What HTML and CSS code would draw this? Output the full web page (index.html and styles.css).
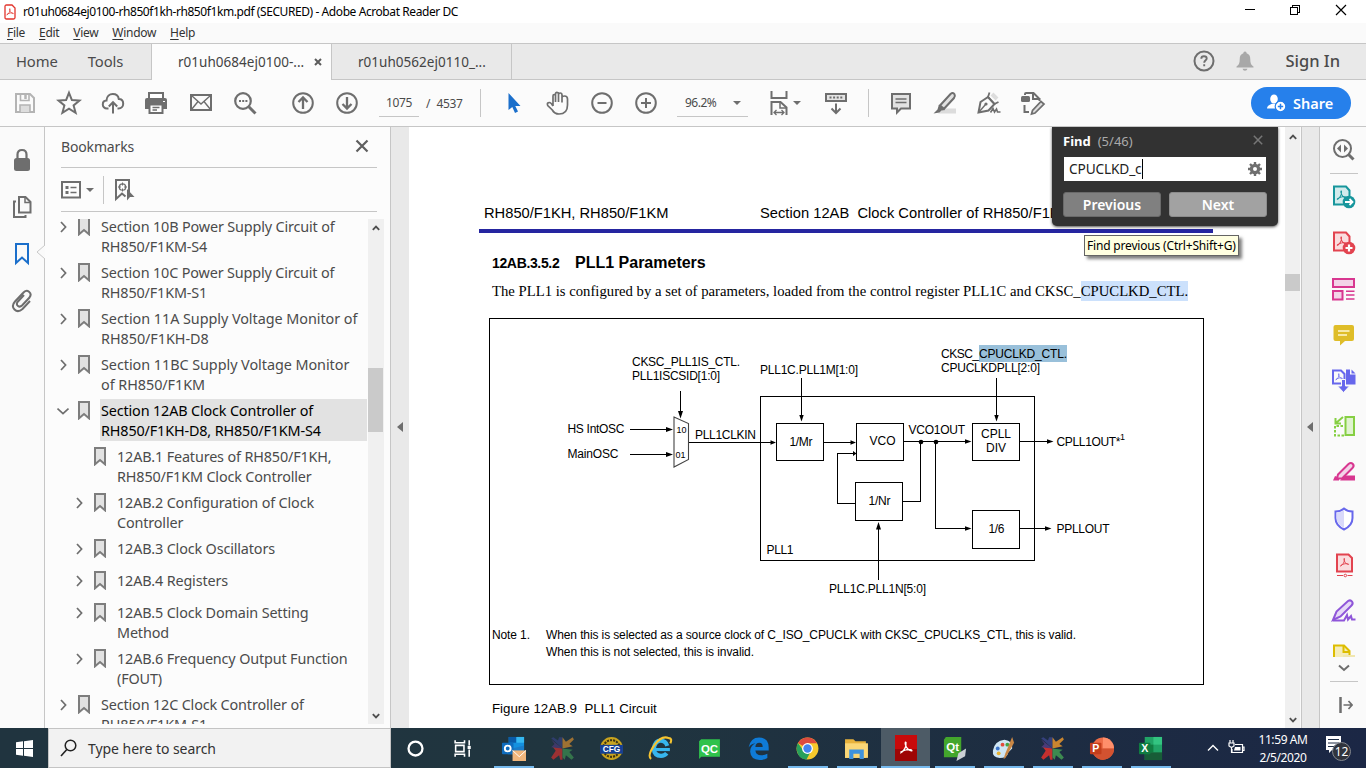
FILE: index.html
```html
<!DOCTYPE html>
<html lang="en">
<head>
<meta charset="utf-8">
<title>r01uh0684ej0100-rh850f1kh-rh850f1km.pdf (SECURED) - Adobe Acrobat Reader DC</title>
<link rel="stylesheet" href="styles.css">
</head>
<body>
<svg class="defs" width="0" height="0">
  <symbol id="bm" viewBox="0 0 12 19"><path d="M1 1H11V17.3L6 13L1 17.3Z" fill="#e2e2e2" stroke="#7d7d7d" stroke-width="2"/></symbol>
  <symbol id="chev" viewBox="0 0 12 12"><path d="M4 1L8.6 6L4 11" fill="none" stroke="#6e6e6e" stroke-width="1.7"/></symbol>
  <symbol id="chevd" viewBox="0 0 12 12"><path d="M.5 3.5L6 8.7L11.5 3.5" fill="none" stroke="#6e6e6e" stroke-width="1.7"/></symbol>
  <symbol id="sbup" viewBox="0 0 8 6"><path d="M.8 4.9L4 1.6L7.2 4.9" fill="none" stroke="#4e4e4e" stroke-width="1.8"/></symbol>
  <symbol id="sbdn" viewBox="0 0 8 6"><path d="M.8 1.1L4 4.4L7.2 1.1" fill="none" stroke="#4e4e4e" stroke-width="1.8"/></symbol>
  <symbol id="acro" viewBox="0 0 12 12"><path d="M1 10.5C4 9 6.5 5 6 1.2C5.4.6 5 1.6 5.6 3.5C6.5 6.5 9 8.6 11 8.4C11.6 7.6 9 7 6.500 7.500C4.500 8 2.500 8.600 1.200 9.700" fill="none" stroke="currentColor" stroke-width="1.100"/></symbol>
  <symbol id="xstar" viewBox="0 0 22 22"><path d="M11 11L1 2L3 1L7 4L8 1Z M11 11L8 1H11Z" fill="#35407c"/><path d="M11 11V1L14 5L20 1L21 3L17 7L20 9Z" fill="#c9852f"/><path d="M11 11L2 9L5 13L1 19L3 21L8 17L9 21H11Z" fill="#c4302f"/><path d="M11 11L20 12L17 14L21 19L19 21L14 17L13 21L11 19Z" fill="#3d8a50"/><path d="M11 11L1 10L4 7L1 3Z" fill="#4a3a78"/></symbol>
</svg>

<header class="titlebar">
  <svg class="app" width="12" height="16" viewBox="0 0 12 16"><path d="M1 2.500Q1 1 2.500 1H8L11 4V13.500Q11 15 9.500 15H2.500Q1 15 1 13.500Z" fill="#fff" stroke="#e2332b" stroke-width="1.300"/><svg x="2" y="4" width="8" height="8" color="#e2332b"><use href="#acro"/></svg></svg>
  <span class="title">r01uh0684ej0100-rh850f1kh-rh850f1km.pdf (SECURED) - Adobe Acrobat Reader DC</span>
  <svg class="winbtns" width="104" height="12" viewBox="0 0 104 12" fill="none" stroke="#000"><path d="M0 5.500H10" /><path d="M45.500 3.500H52.500V10.500H45.500ZM47.500 3V1.500H54.500V8.500H53" shape-rendering="crispEdges"/><path d="M91 1L101 11M101 1L91 11" stroke-width="1.200"/></svg>
</header>
<nav class="menubar"><span><u>F</u>ile</span><span><u>E</u>dit</span><span><u>V</u>iew</span><span><u>W</u>indow</span><span><u>H</u>elp</span></nav>

<div class="tabs">
  <div class="hometabs"><span>Home</span><span>Tools</span></div>
  <div class="tab active"><span>r01uh0684ej0100-...</span><svg width="8" height="8" viewBox="0 0 8 8"><path d="M1 1L7 7M7 1L1 7" stroke="#5c5c5c" stroke-width="2"/></svg></div>
  <div class="tab other"><span>r01uh0562ej0110_...</span></div>
  <div class="account">
    <svg width="22" height="22" viewBox="0 0 22 22"><circle cx="11" cy="11" r="9.500" fill="none" stroke="#6e6e6e" stroke-width="2"/><path d="M8.300 8.700Q8.300 6.300 11 6.300T13.700 8.500C13.700 10.200 11.200 10.400 11.200 12.700M11.200 14.200V16.200" fill="none" stroke="#6e6e6e" stroke-width="1.900"/></svg>
    <svg class="bell" width="18" height="20" viewBox="0 0 18 20"><path d="M9 0.500C10.200 .5 10.600 1.500 10.600 2.300C13.500 3.200 14.300 5.500 14.300 8.500C14.300 12.500 15.300 14 17.500 15.500V16.500H.5V15.500C2.700 14 3.700 12.500 3.700 8.500C3.700 5.500 4.500 3.200 7.400 2.300C7.400 1.500 7.800 .5 9 .5ZM6.500 17.800H11.500Q11 19.800 9 19.800T6.500 17.800Z" fill="#a8a8a8"/></svg>
    <span>Sign In</span>
  </div>
</div>

<div class="toolbar">
  <div class="grp g1">
    <svg viewBox="0 0 26 26" fill="none" stroke="#b4b4b4" stroke-width="2"><path d="M4 4H18L22 8V22H4Z"/><path d="M8.500 4V10.500H17V4" stroke-width="1.600"/><path d="M13.500 5V9" stroke-width="2.500"/><path d="M8 22V15H18V22" fill="#ddd" stroke-width="1.600"/></svg>
    <svg viewBox="0 0 26 26"><path d="M13 2.800L15.900 10.100L23.500 10.500L17.600 15.400L19.600 22.800L13 18.600L6.400 22.800L8.400 15.400L2.500 10.500L10.100 10.100Z" fill="none" stroke="#6e6e6e" stroke-width="2"/></svg>
    <svg viewBox="0 0 26 26" fill="none" stroke="#6e6e6e" stroke-width="2"><path d="M8.500 18.500H7C4.300 18.500 2.800 16.500 2.800 14.400C2.800 12.200 4.300 10.600 6.500 10.500C6.700 6.500 9.400 4 12.800 4C16.200 4 18.400 6.300 18.800 9C21.600 9 23.200 11 23.200 13.700C23.200 16.500 21.300 18.500 18.500 18.500H17.500"/><path d="M13 23.500V12.500M8.800 16.500L13 12.200L17.200 16.500"/></svg>
    <svg class="print" viewBox="0 0 26 26"><path d="M6 3H20V9H6Z" fill="#fff" stroke="#6e6e6e" stroke-width="2"/><path d="M4 8H22Q24 8 24 10V19H2V10Q2 8 4 8Z" fill="#6e6e6e"/><path d="M6.500 14.500H19.500V23H6.500Z" fill="#fff" stroke="#6e6e6e" stroke-width="2"/><path d="M9.500 17.500H16.500M9.500 20H14" stroke="#6e6e6e" stroke-width="1.300"/><path d="M20 11.500H22" stroke="#fff"/></svg>
    <svg viewBox="0 0 26 26" fill="none" stroke="#6e6e6e"><rect x="3" y="5" width="20" height="15" stroke-width="2"/><path d="M3.500 5.500L13 14L22.500 5.500M3.500 19.500L10 11.500M22.500 19.500L16 11.500" stroke-width="1.400"/></svg>
    <svg viewBox="0 0 26 26" fill="none" stroke="#6e6e6e"><circle cx="11" cy="11" r="7.800" stroke-width="2.200"/><path d="M16.800 16.800L23.500 23.500" stroke-width="3"/><path d="M7 11H9M10.200 11H12.200M13.400 11H15.400" stroke-width="1.800"/></svg>
  </div>
  <div class="grp g2">
    <svg viewBox="0 0 26 26" fill="none" stroke="#6e6e6e" stroke-width="2"><circle cx="13" cy="13" r="9.800"/><path d="M13 19V8M8.500 12L13 7.500L17.500 12" stroke-width="2.300"/></svg>
    <svg viewBox="0 0 26 26" fill="none" stroke="#6e6e6e" stroke-width="2"><circle cx="13" cy="13" r="9.800"/><path d="M13 7V18M8.500 14L13 18.500L17.500 14" stroke-width="2.300"/></svg>
  </div>
  <div class="pageno">1075</div><div class="pages">/&nbsp; 4537</div>
  <i class="sep s1"></i>
  <div class="grp g3">
    <svg viewBox="0 0 26 26"><path d="M7.500 3V20L11.300 17L14 23L17 21.500L14.300 16H19.500Z" fill="#1b6fcb"/></svg>
    <svg viewBox="0 0 26 26" fill="none" stroke="#6e6e6e" stroke-width="1.700"><path d="M8 16V6Q8 4.500 9.200 4.500T10.500 6V12M10.500 6V4Q10.500 2.300 12 2.300T13.500 4V12M13.500 5Q13.500 3 15.200 3T17 5V12.500M17 7.500Q17.200 6 19.500 6Q22.500 6 22.500 9V15Q22.500 24 14 24Q9.500 24 7.300 20L2.700 15.500Q1.500 12.500 4.500 12.500Q6 12.500 8 16"/></svg>
    <svg viewBox="0 0 26 26" fill="none" stroke="#6e6e6e" stroke-width="2"><circle cx="13" cy="13" r="9.800"/><path d="M8.500 13H17.500"/></svg>
    <svg viewBox="0 0 26 26" fill="none" stroke="#6e6e6e" stroke-width="2"><circle cx="13" cy="13" r="9.800"/><path d="M8 13H18M13 8V18"/></svg>
  </div>
  <div class="zoom"><span>96.2%</span><i class="caret"></i></div>
  <div class="fit"><svg width="18" height="26" viewBox="0 0 18 26" fill="none" stroke="#6e6e6e" stroke-width="2"><path d="M1.500 1V8H16.500V1M1.500 25V12H10.500L16.500 17.500V25"/><path d="M10 12V18H16" stroke-width="1.500"/><path d="M4 22.500H14M6.500 20L4 22.500L6.500 25M11.500 20L14 22.500L11.500 25" stroke-width="1.300"/></svg><i class="caret"></i></div>
  <svg class="kb" viewBox="0 0 26 26" fill="none" stroke="#6e6e6e" stroke-width="2"><rect x="3" y="4" width="20" height="7" fill="#e4e4e4"/><path d="M6.500 7.500H20" stroke-dasharray="2 1.600"/><path d="M13 13.500V23M8.500 18.500L13 23L17.500 18.500"/></svg>
  <i class="sep s2"></i>
  <div class="grp g4">
    <svg viewBox="0 0 26 26"><path d="M4 4H22V18.500H13L9 22.500V18.500H4Z" fill="#e2e2e2" stroke="#6e6e6e" stroke-width="2"/><path d="M7.500 9H18.500M7.500 12.500H18.500" stroke="#6e6e6e" stroke-width="1.500"/></svg>
    <svg viewBox="0 0 26 26"><path d="M12 18.500H24V23.500H6Z" fill="#dcdcdc"/><path d="M8 15.500L18.500 4Q21 2 22.500 4.300Q23.500 6 22 8L12 18.800Z" fill="#e0e0e0" stroke="#6e6e6e" stroke-width="2"/><path d="M7 14.500L13 20L9.500 20.500L7.500 22.500L1.500 23.500L5.500 19.500Z" fill="#6e6e6e"/></svg>
    <svg viewBox="0 0 26 26" fill="none" stroke="#6e6e6e" stroke-width="2"><path d="M16 4L21 9" stroke="#ddd" stroke-width="4"/><path d="M2.500 22.500L4.500 12L12 7L18.500 14L12.500 20.500Z"/><path d="M3 22L9.500 14.500" stroke-width="1.400"/><circle cx="10" cy="14" r="1.600" fill="#6e6e6e" stroke="none"/><path d="M13.500 2.500L12 7L18.500 14L22.500 12" stroke-width="1.800"/><path d="M14.500 22.500L17 18.500L18.500 22L20.500 19L21.500 22H24.500" stroke-width="1.600"/></svg>
    <svg viewBox="0 0 26 26" fill="none" stroke="#6e6e6e" stroke-width="2"><path d="M5 5V4Q5 3 6 3H13.500L19 8.500M4.500 15V22H9M13 3V9H19.500V11"/><rect x="1" y="6" width="9" height="6" rx="1.500" fill="#6e6e6e" stroke="none"/><path d="M11.500 24L12.500 20.500L21 11.500L24 14L15 23Z" fill="#ddd" stroke-width="1.700"/></svg>
  </div>
  <button class="share"><svg width="19" height="18" viewBox="0 0 19 18"><ellipse cx="7" cy="5" rx="3.800" ry="4.500" fill="#fff"/><path d="M0 14.500Q0 11.500 5 9.800H9Q10.500 10.500 11 11V14.500Z" fill="#fff"/><circle cx="13.500" cy="12.500" r="5.300" fill="#fff" stroke="#2680eb" stroke-width="1.200"/><path d="M10.800 12.500H16.200M13.500 9.800V15.200" stroke="#2680eb" stroke-width="1.500"/></svg><span>Share</span></button>
</div>

<main class="main">
  <aside class="rail">
    <svg width="18" height="24" viewBox="0 0 18 24"><path d="M4.500 11V6.500Q4.500 2 9 2T13.500 6.500V11" fill="none" stroke="#6e6e6e" stroke-width="2.200"/><rect x="1" y="10" width="16" height="13" rx="2.500" fill="#6e6e6e"/></svg>
    <svg width="20" height="24" viewBox="0 0 20 24" fill="none" stroke="#6e6e6e" stroke-width="2"><path d="M4 6.500H2V22H13.500V20"/><path d="M7 2H13.500L18.500 7V17.500H7Z"/><path d="M13 2.500V7.500H18" stroke-width="1.500"/></svg>
    <svg width="16" height="24" viewBox="0 0 16 24"><path d="M2 2H14V21L8 15.500L2 21Z" fill="none" stroke="#1b6fcb" stroke-width="2"/></svg>
    <svg width="22" height="24" viewBox="0 0 22 24"><path d="M13 6L6.500 13Q5 15.500 7 17T11 16.500L18.500 8.500Q21 5 18 2.700T12 4L4 12.500Q0 17 3.500 20.500T11.500 20L19 12" fill="none" stroke="#6e6e6e" stroke-width="2"/></svg>
    <svg class="notch" width="9" height="16" viewBox="0 0 9 16"><path d="M9 1L1 8L9 15" fill="#fafafa" stroke="#c8c8c8"/></svg>
  </aside>
  <section class="bookmarks">
    <div class="bhead"><span>Bookmarks</span><svg width="14" height="14" viewBox="0 0 14 14"><path d="M1.500 1.500L12.500 12.500M12.500 1.500L1.500 12.500" stroke="#5f5f5f" stroke-width="2.200"/></svg></div>
    <div class="btools">
      <svg width="20" height="18" viewBox="0 0 20 18"><rect x="1" y="1" width="18" height="15.500" fill="none" stroke="#6e6e6e" stroke-width="2"/><path d="M4.500 6.500H7.500M4.500 11.500H7.500" stroke="#6e6e6e" stroke-width="3"/><path d="M9.500 6.500H15.500M9.500 11.500H15.500" stroke="#6e6e6e" stroke-width="1.600"/></svg>
      <i class="caret"></i><i class="bsep"></i>
      <svg width="21" height="24" viewBox="0 0 21 24"><path d="M2 2H15V14M2 1V21L8 15.500L11.500 18.500" fill="none" stroke="#6e6e6e" stroke-width="2"/><circle cx="8.500" cy="9" r="3.200" fill="none" stroke="#6e6e6e" stroke-width="1.300"/><path d="M8.500 4.500V7.500M8.500 10.500V13.500M4 9H7M10 9H13" stroke="#6e6e6e"/><path d="M13 11V22.500L16 19H20.500Z" fill="#6e6e6e"/></svg>
    </div>
    <div class="blist">
      <div class="items">
        <div class="row"><svg class="c"><use href="#chev"/></svg><svg class="b"><use href="#bm"/></svg><p>Section 10B Power Supply Circuit of<br>RH850/F1KM-S4</p></div>
        <div class="row"><svg class="c"><use href="#chev"/></svg><svg class="b"><use href="#bm"/></svg><p>Section 10C Power Supply Circuit of<br>RH850/F1KM-S1</p></div>
        <div class="row"><svg class="c"><use href="#chev"/></svg><svg class="b"><use href="#bm"/></svg><p class="wide">Section 11A Supply Voltage Monitor of<br>RH850/F1KH-D8</p></div>
        <div class="row"><svg class="c"><use href="#chev"/></svg><svg class="b"><use href="#bm"/></svg><p class="wide">Section 11BC Supply Voltage Monitor<br>of RH850/F1KM</p></div>
        <div class="row sel"><svg class="c"><use href="#chevd"/></svg><svg class="b"><use href="#bm"/></svg><p>Section 12AB Clock Controller of<br>RH850/F1KH-D8, RH850/F1KM-S4</p></div>
        <div class="row sub"><svg class="c"></svg><svg class="b"><use href="#bm"/></svg><p>12AB.1 Features of RH850/F1KH,<br>RH850/F1KM Clock Controller</p></div>
        <div class="row sub"><svg class="c"><use href="#chev"/></svg><svg class="b"><use href="#bm"/></svg><p>12AB.2 Configuration of Clock<br>Controller</p></div>
        <div class="row sub"><svg class="c"><use href="#chev"/></svg><svg class="b"><use href="#bm"/></svg><p>12AB.3 Clock Oscillators</p></div>
        <div class="row sub"><svg class="c"><use href="#chev"/></svg><svg class="b"><use href="#bm"/></svg><p>12AB.4 Registers</p></div>
        <div class="row sub"><svg class="c"><use href="#chev"/></svg><svg class="b"><use href="#bm"/></svg><p>12AB.5 Clock Domain Setting<br>Method</p></div>
        <div class="row sub"><svg class="c"><use href="#chev"/></svg><svg class="b"><use href="#bm"/></svg><p>12AB.6 Frequency Output Function<br>(FOUT)</p></div>
        <div class="row"><svg class="c"><use href="#chev"/></svg><svg class="b"><use href="#bm"/></svg><p>Section 12C Clock Controller of<br>RH850/F1KM-S1</p></div>
      </div>
      <div class="sbar bsb"><svg width="8" height="6"><use href="#sbup"/></svg><i class="thumb"></i><svg class="dn" width="8" height="6"><use href="#sbdn"/></svg></div>
    </div>
  </section>
  <div class="gutter"><i></i></div>
  <article class="page">
    <div class="phead"><span class="p1">RH850/F1KH, RH850/F1KM</span><span class="p2">Section 12AB&nbsp; Clock Controller of RH850/F1K</span></div>
    <h2><span class="num">12AB.3.5.2</span><span class="name">PLL1 Parameters</span></h2>
    <p class="para"><span>The PLL1 is configured by a set of parameters, loaded from the control register PLL1C and CKSC_</span><mark>CPUCLKD_CTL.</mark></p>
    <svg class="figure" width="715" height="367" viewBox="489 318 715 367">
      <g fill="none" stroke="#000" shape-rendering="crispEdges">
        <rect x="489.500" y="318.500" width="714" height="366"/>
        <rect x="760.500" y="396.500" width="274" height="164"/>
        <rect x="776.500" y="423.500" width="47" height="37"/><rect x="856.500" y="423.500" width="47" height="37"/>
        <rect x="855.500" y="482.500" width="47" height="38"/><rect x="972.500" y="423.500" width="47" height="37"/>
        <rect x="972.500" y="510.500" width="47" height="38"/>
        <path d="M680.500 391V414M630 429.500H668M630 454.500H668M689 442.500H772M824 442.500H852M801.500 378V417M855 503.500H837.500V453.500H853M904 441.500H968M920.500 442V501.500H903M935.500 442V528.500H968M1020 441.500H1050M1020 528.500H1048M996.500 378V417M878.500 580V526"/>
      </g>
      <path d="M674 417L688.500 423.500V459.500L674 467Z" fill="none" stroke="#444" stroke-width="1.100"/>
      <g fill="#000">
        <path d="M678 411H683L680.500 418.500ZM666 427V432L673 429.500ZM666 452V457L673 454.500ZM770.500 440.300V444.700L776 442.500ZM850.500 440.300V444.700L856 442.500ZM799.300 415H803.700L801.500 421.500ZM853 451V456L856.500 453.500ZM965 439.300V443.700L971.500 441.500ZM965 526.300V530.700L971.500 528.500ZM1047 439.300V443.700L1053.500 441.500ZM1045 526.300V530.700L1051.500 528.500ZM994.300 415H998.700L996.500 421.500ZM876 529.500H881L878.500 522Z"/>
        <circle cx="921" cy="442" r="2.300"/><circle cx="936" cy="442" r="2.300"/>
      </g>
      <rect x="979" y="345" width="88" height="17" fill="#99c0da"/>
      <g class="lbl">
        <text x="632" y="366" textLength="108">CKSC_PLL1IS_CTL.</text><text x="632" y="380" textLength="88">PLL1ISCSID[1:0]</text>
        <text x="760" y="374" textLength="98">PLL1C.PLL1M[1:0]</text>
        <text x="941" y="358" textLength="38">CKSC_</text><text x="979" y="358" textLength="88">CPUCLKD_CTL.</text>
        <text x="941" y="372" textLength="99">CPUCLKDPLL[2:0]</text>
        <text x="567.500" y="433" textLength="57">HS IntOSC</text><text x="567.500" y="458" textLength="51">MainOSC</text>
        <text x="676.500" y="433" class="tiny" textLength="10">10</text><text x="675.500" y="458" class="tiny" textLength="10">01</text>
        <text x="695" y="439" textLength="61">PLL1CLKIN</text>
        <text x="789.500" y="446" textLength="23">1/Mr</text><text x="869.500" y="445" textLength="26">VCO</text>
        <text x="868.500" y="505" textLength="22">1/Nr</text><text x="908.500" y="434" textLength="56.500">VCO1OUT</text>
        <text x="981" y="438" textLength="30">CPLL</text><text x="986" y="452" textLength="20">DIV</text>
        <text x="1056.500" y="446" textLength="64">CPLL1OUT*</text><text x="1120" y="440" class="tiny">1</text>
        <text x="1056.500" y="533" textLength="53">PPLLOUT</text><text x="988.500" y="533" textLength="16">1/6</text>
        <text x="766.500" y="554" textLength="27">PLL1</text><text x="829" y="593" textLength="97">PLL1C.PLL1N[5:0]</text>
        <text x="492" y="639" textLength="38">Note 1.</text>
        <text x="546" y="639" textLength="530">When this is selected as a source clock of C_ISO_CPUCLK with CKSC_CPUCLKS_CTL, this is valid.</text>
        <text x="546" y="656" textLength="208">When this is not selected, this is invalid.</text>
      </g>
    </svg>
    <p class="caption">Figure 12AB.9&nbsp; PLL1 Circuit</p>
    <div class="find">
      <div class="ftop"><b>Find</b><span>(5/46)</span><svg width="10" height="10" viewBox="0 0 10 10"><path d="M.8.8L9.200 9.200M9.200.8L.8 9.200" stroke="#777" stroke-width="1.500"/></svg></div>
      <div class="finput"><span>CPUCLKD_c</span><svg width="14" height="14" viewBox="0 0 14 14"><circle cx="7" cy="7" r="3.600" fill="none" stroke="#6e6e6e" stroke-width="3.200"/><path d="M7 0V2.500M7 11.500V14M0 7H2.500M11.500 7H14M2 2L4 4M10 10L12 12M12 2L10 4M4 10L2 12" stroke="#6e6e6e" stroke-width="2.400"/></svg></div>
      <div class="fbtns"><button>Previous</button><button class="next">Next</button></div>
    </div>
    <div class="tip">Find previous (Ctrl+Shift+G)</div>
  </article>
  <div class="sbar psb"><svg width="8" height="6"><use href="#sbup"/></svg><i class="thumb"></i><svg class="dn" width="8" height="6"><use href="#sbdn"/></svg></div>
  <div class="gutter right"><i></i></div>
  <aside class="tools">
    <svg class="t0" viewBox="0 0 26 26"><circle cx="11.500" cy="11.500" r="8.500" fill="none" stroke="#6e6e6e" stroke-width="2"/><path d="M17.500 17.500L22.500 22.500" stroke="#6e6e6e" stroke-width="3"/><path d="M10 7.500V15.500L6 11.500ZM13 7.500V15.500L17 11.500Z" fill="#6e6e6e"/></svg>
    <hr>
    <div class="tlist">
    <svg viewBox="0 0 26 26"><path d="M3 2.500H15L18.500 6.500V20.500H3Z" fill="#d3ebec" stroke="#17969c" stroke-width="2"/><svg x="5" y="6" width="11" height="11" color="#17969c"><use href="#acro"/></svg><circle cx="18" cy="18" r="6.300" fill="#17969c"/><path d="M14 18H21M18.500 15L21.500 18L18.500 21" stroke="#fff" stroke-width="1.800" fill="none"/></svg>
    <svg viewBox="0 0 26 26"><path d="M3 2.500H15L18.500 6.500V20.500H3Z" fill="#fadcde" stroke="#e2434f" stroke-width="2"/><svg x="5" y="6" width="11" height="11" color="#e2434f"><use href="#acro"/></svg><circle cx="18" cy="18" r="6.300" fill="#e2434f"/><path d="M14.500 18H21.500M18 14.500V21.500" stroke="#fff" stroke-width="2.200"/></svg>
    <svg viewBox="0 0 26 26" fill="#f3d3e8" stroke="#d83790" stroke-width="2"><path d="M2 3H23V11H2ZM2 15H11.500V23.500H2Z"/><path d="M15 15.200H23.500M15 19H23.500M15 23H23.500" stroke-width="1.400"/></svg>
    <svg viewBox="0 0 26 26"><path d="M4.500 3H21Q23 3 23 5V17Q23 19 21 19H14L9 23.500V19H4.500Q2.500 19 2.500 17V5Q2.500 3 4.500 3Z" fill="#dfbd28"/><path d="M7 9H18.500M7 13H16" stroke="#fff8d0" stroke-width="1.600"/></svg>
    <svg viewBox="0 0 26 26"><path d="M15 1.500H19V6.500H24.500V16.500H15Z" fill="#6767ec"/><path d="M20.500 1.500L24.500 5.500H20.500Z" fill="#6767ec"/><path d="M2 2.500H10L13.500 6V15.500H2Z" fill="#fafafa" stroke="#6767ec" stroke-width="2"/><svg x="4" y="5" width="8" height="8" color="#6767ec"><use href="#acro"/></svg><path d="M10.500 11.500H14.500V18H18.500L12.500 24.500L6.500 18H10.500Z" fill="#6767ec" stroke="#fafafa"/></svg>
    <svg viewBox="0 0 26 26" fill="none" stroke="#86cf43" stroke-width="2"><rect x="14.500" y="3" width="8.500" height="18" fill="#e0f3d0"/><path d="M12 12H4V21.500H13" stroke-dasharray="2.500 1.500"/><path d="M12 3L5 9M4.500 4V9.500H10"/></svg>
    <svg viewBox="0 0 26 26"><path d="M9 20.500L14 15.500H24V20.500ZM2 20.500L4 16L8 17.500V20.500Z" fill="#d83790"/><path d="M7 14.500L17.500 4Q20 2 21.800 4T21.500 8L11 18.500L6 18.500Z" fill="#f3d3e8" stroke="#d83790" stroke-width="2"/></svg>
    <svg viewBox="0 0 26 26"><path d="M13 2.500Q16.500 5.500 21.500 5.500V12Q21.500 19.500 13 23.500Q4.500 19.500 4.500 12V5.500Q9.500 5.500 13 2.500Z" fill="#fff" stroke="#6767ec" stroke-width="2"/><path d="M13 4V22Q5.500 18 5.500 12V6.500Q9.500 6.500 13 4Z" fill="#d9d9fa"/></svg>
    <svg viewBox="0 0 26 26"><path d="M6 2.500H17.500L21 6V19.500H6Z" fill="#fadcde" stroke="#e2434f" stroke-width="2"/><svg x="8.500" y="5.500" width="10" height="10" color="#e2434f"><use href="#acro"/></svg><path d="M6 23.500H12M16.500 23.500H21.500" stroke="#e2434f"/><circle cx="14.300" cy="23.500" r="1.300" fill="none" stroke="#e2434f"/></svg>
    <svg viewBox="0 0 26 26" fill="none" stroke="#8f56d9" stroke-width="2"><path d="M2 22L5.500 13.500L17 3Q19.500 1.500 21 3.500T20.500 7.500L9.500 18.500L2 22Z" fill="#e6d9f7"/><path d="M2 22.500H13L16 17L17 21.500L20 18L21 21.500H24.500"/></svg>
    <svg class="cut" viewBox="0 0 26 14"><path d="M3 14V2.500H13L18.500 8V14" fill="#f5ecb8" stroke="#ddbd00" stroke-width="2"/><path d="M12.500 2V9H19" fill="none" stroke="#ddbd00" stroke-width="2"/><path d="M12 13H24" stroke="#f0e6b0" stroke-width="2"/></svg>
    </div>
    <svg class="more" width="12" height="8" viewBox="0 0 12 8"><path d="M1 1.500L6 6L11 1.500" fill="none" stroke="#6e6e6e" stroke-width="2"/></svg>
    <hr>
    <svg class="coll" width="14" height="16" viewBox="0 0 14 16"><path d="M1.500 0V16" stroke="#6e6e6e" stroke-width="2.500"/><path d="M4.500 8H13M9.500 4L13 8L9.500 12" fill="none" stroke="#6e6e6e" stroke-width="1.700"/></svg>
  </aside>
</main>

<footer class="taskbar">
  <div class="start"><svg width="17" height="17" viewBox="0 0 17 17" fill="#fff"><path d="M0 2.300L7 1.300V8H0ZM8 1.200L17 0V8H8ZM0 9H7V15.700L0 14.700ZM8 9H17V17L8 15.800Z"/></svg></div>
  <div class="search"><svg width="17" height="18" viewBox="0 0 17 18"><circle cx="10.500" cy="6.500" r="5.300" fill="none" stroke="#222" stroke-width="1.500"/><path d="M6.800 10.500L1 17" stroke="#222" stroke-width="1.600"/></svg><span>Type here to search</span></div>
  <div class="apps">
    <div><svg viewBox="0 0 24 24"><circle cx="12" cy="12" r="6.700" fill="none" stroke="#fff" stroke-width="2.200"/></svg></div>
    <div><svg viewBox="0 0 24 24" fill="none" stroke="#fff" stroke-width="1.500"><path d="M3 4V6.500H12V4M3 20V17.500H12V20M3.500 9H11.500V15H3.500ZM16.500 4V9M16.500 13V20"/><path d="M15 11H18" stroke-width="3"/></svg></div>
    <div class="run"><svg viewBox="0 0 26 26"><path d="M8 1H24V14H8Z" fill="#1490df"/><path d="M8 1H16V7H8Z" fill="#0a5ba8"/><path d="M16 1H24V7H16Z" fill="#35b8f1"/><path d="M7 14L24 10V19H7Z" fill="#1a7cc9"/><rect x="1" y="7" width="12" height="12" rx="1" fill="#0f6cbd"/><circle cx="7" cy="13" r="3" fill="none" stroke="#fff" stroke-width="2"/><path d="M12 15H27V26H12Z" fill="#f0b67c"/><path d="M12 15L19 21.500L26 15" fill="none" stroke="#fff"/></svg></div>
    <div><svg class="dim" viewBox="0 0 22 22"><use href="#xstar"/></svg></div>
    <div><svg viewBox="0 0 24 24"><circle cx="12" cy="12" r="11" fill="#c9a41f"/><circle cx="12" cy="12" r="8" fill="none" stroke="#3b3312" stroke-width="2" stroke-dasharray="2 1"/><path d="M1 8.500H23V17H1Z" fill="#153f94"/><text x="12" y="15.500" class="cfg">CFG</text></svg></div>
    <div><svg viewBox="0 0 24 24"><path d="M18.500 9.500Q17 4.500 12 4.500T5.500 12Q6 19 12.500 19Q16 19 18 16.500" fill="none" stroke="#37b6ee" stroke-width="4"/><path d="M6 13H21" stroke="#37b6ee" stroke-width="3"/><path d="M3 22Q-1 19 6 9T20 2Q23.500 2 21.500 7" fill="none" stroke="#f5c431" stroke-width="2"/></svg></div>
    <div><svg viewBox="0 0 24 24"><path d="M4 3H22V20H4L2 22V5Z" fill="#2fc24c"/><text x="12" y="16" class="qc">QC</text></svg></div>
    <div><svg viewBox="0 0 24 24"><path d="M2.500 11Q4.500 1.500 12.500 1.500Q21.500 1.500 21.800 11V14H9Q9.500 18.500 14.500 18.500Q18 18.500 20.500 17V21Q17.500 23 13 23Q4.500 22.500 4 15Q4 9.500 9 7Q5 7.500 2.500 11ZM9 10.500H16Q16 6.500 12.700 6.500T9 10.500Z" fill="#0f7bd7" fill-rule="evenodd"/></svg></div>
    <div class="run"><svg viewBox="0 0 24 24"><circle cx="12" cy="12" r="10.500" fill="#f6c92c"/><path d="M12 12L2.800 6.800Q6 1.500 12 1.500T21.200 7H12Z" fill="#dd4b3e"/><path d="M2.800 6.800Q.5 11 2.500 16.500T11 22.500L15 15L8 14Z" fill="#28a05b"/><circle cx="12" cy="12" r="5.200" fill="#fff"/><circle cx="12" cy="12" r="4" fill="#4384ef"/></svg></div>
    <div class="run"><svg viewBox="0 0 24 24"><path d="M1 3H9L11 5H21V21H1Z" fill="#e8b23c"/><path d="M1 7H23V21H1Z" fill="#fbd777"/><path d="M5 13H19V22H15V17H9V22H5Z" fill="#3e92dd"/></svg></div>
    <div class="run on"><svg viewBox="0 0 26 26"><path d="M2 0H24V26H2Z" fill="#c80a0a"/><path d="M2 14H24V26H2Z" fill="#9e0505"/><svg x="6" y="6" width="14" height="14" color="#fff"><use href="#acro"/></svg></svg></div>
    <div class="run"><svg viewBox="0 0 26 26"><path d="M4 1H20V18L16 22H2V4Z" fill="#43a62c"/><text x="11" y="16" class="qt">Qt</text><path d="M15 26L17 18L25 13L24 21Z" fill="#cbd0d5"/></svg></div>
    <div class="run"><svg viewBox="0 0 26 26"><path d="M2 15Q4 5 14 4Q23 5 22 13Q20 15 18 17Q17 23 9 23Q1 22 2 15Z" fill="#cfe6f4"/><circle cx="7" cy="13" r="2" fill="#3c74c9"/><circle cx="12" cy="9" r="2" fill="#e34b3c"/><circle cx="17" cy="9" r="2" fill="#44a647"/><circle cx="8" cy="18" r="2" fill="#e8b331"/><path d="M22 1L24 7L15 23L13 24L15 18Z" fill="#c98745"/></svg></div>
    <div class="run"><svg viewBox="0 0 22 22"><use href="#xstar"/></svg></div>
    <div class="run"><svg viewBox="0 0 26 26"><circle cx="14.500" cy="13" r="11.500" fill="#ed6c47"/><path d="M14.500 1.500A11.500 11.500 0 0 1 26 13H14.500Z" fill="#ff8f6b"/><path d="M3 13H26A11.500 11.500 0 0 1 4 18Z" fill="#d35230"/><rect x="1" y="7" width="12" height="12" rx="1" fill="#c43e1c"/><text x="7" y="17" class="off">P</text></svg></div>
    <div class="run"><svg viewBox="0 0 26 26"><path d="M7 1H25V25H7Z" fill="#21a366"/><path d="M16 1H25V9H16Z" fill="#33c481"/><path d="M7 9H16V17H7Z" fill="#107c41"/><path d="M7 17H25V25H7Z" fill="#185c37"/><rect x="1" y="7" width="12" height="12" rx="1" fill="#107c41"/><text x="7" y="17" class="off">X</text></svg></div>
  </div>
  <div class="tray">
    <svg class="up" width="12" height="8" viewBox="0 0 12 8"><path d="M1 6.500L6 1.500L11 6.500" fill="none" stroke="#fff" stroke-width="1.400"/></svg>
    <svg class="bat" width="17" height="16" viewBox="0 0 17 16" fill="none" stroke="#fff" stroke-width="1.200"><path d="M7 4.500H14.500V12.500H4V9M14.500 7H16V10.500H14.500M2 0V3M5 0V3M1 3H6V6L3.500 7.500L1 6ZM3.500 7V13"/><path d="M7 7H12.500V10.500H6Z" fill="#fff" stroke="none"/></svg>
    <div class="clock">11:59 AM<br>2/5/2020</div>
    <svg class="note" width="28" height="28" viewBox="0 0 28 28"><path d="M2 2H17V16H8L5 19V16H2Z" fill="#fff"/><path d="M4 5.500H15M4 9H15M4 12.500H12" stroke="#1c2b44"/><circle cx="17.500" cy="17.500" r="9" fill="#30343d" stroke="#84888f"/><text x="17.500" y="22" class="cnt">12</text></svg>
  </div>
</footer>
</body>
</html>
```
FILE: styles.css
```css
* { box-sizing: border-box; margin: 0; padding: 0; }
body { width: 1366px; height: 768px; overflow: hidden; display: flex; flex-direction: column; font-family: "Noto Sans", "Open Sans", sans-serif; background: #fff; color: #4b4b4b; }
svg { display: block; flex: none; }
.defs { position: absolute; }
i { display: block; flex: none; }
button { border: 0; font: inherit; }

.titlebar { height: 23px; display: flex; align-items: center; padding-left: 4px; background: #fff; color: #000; font-size: 12px; flex: none; }
.title { margin-left: 7px; white-space: nowrap; letter-spacing: -0.42px; }
.winbtns { margin: -3px 17px 0 auto; }
.menubar { height: 20px; flex: none; background: #fafafa; display: flex; align-items: center; padding: 0 0 2px 7px; gap: 14px; font-size: 12px; letter-spacing: -0.3px; color: #333; }
.menubar u { text-underline-offset: 2px; }

.tabs { height: 37px; flex: none; display: flex; background: #e9e9e9; border-top: 1px solid #c6c6c6; border-bottom: 1px solid #c6c6c6; }
.hometabs { width: 151px; display: flex; align-items: center; padding: 0 0 2px 16px; gap: 30px; font-size: 14.800px; letter-spacing: -0.1px; }
.tab { display: flex; align-items: center; font-size: 13.500px; border-right: 1px solid #c6c6c6; letter-spacing: 0.02px; white-space: nowrap; color: #444; }
.tab.active { width: 181px; border-left: 1px solid #c6c6c6; background: #fcfcfc; padding-left: 26px; height: 36px; gap: 10px; }
.tab.other { width: 180px; padding-left: 26px; }
.account { margin-left: auto; display: flex; align-items: center; padding: 0 26px 2px 0; font-size: 16.500px; font-weight: 500; }
.account .bell { margin: 0 31px 0 21px; }

.toolbar { height: 47px; flex: none; background: #fbfbfb; border-bottom: 1px solid #c6c6c6; display: flex; align-items: center; }
.grp { display: flex; flex: none; }
.grp svg { width: 26px; height: 26px; margin: 0 9px; }
.grp .print { margin: 0 10px 0 8px; }
.g1 { margin-left: 3px; }
.g2 { margin-left: 14px; }
.pageno { width: 40px; margin-left: 10px; height: 28px; border-bottom: 1px solid #c6c6c6; text-align: center; font-size: 12px; line-height: 28px; letter-spacing: -0.4px; }
.pages { width: 61px; padding-left: 7px; font-size: 12px; letter-spacing: -0.4px; word-spacing: 0.5px; white-space: nowrap; }
.sep { width: 1px; height: 28px; background: #c6c6c6; }
.g3 { margin-left: 11px; }
.zoom { width: 71px; height: 28px; margin-left: 9px; border-bottom: 1px solid #c6c6c6; display: flex; align-items: center; padding: 0 7px 0 8px; justify-content: space-between; font-size: 12px; letter-spacing: -0.5px; }
.caret { width: 0; height: 0; border: 4px solid transparent; border-top: 4px solid #6e6e6e; border-bottom: 0; }
.fit { width: 66px; display: flex; align-items: center; gap: 5px; padding-left: 22px; }
.kb { width: 26px; height: 26px; margin: 0 19px 0 9px; }
.s2 { margin-right: 10px; }
.share { margin: 0 15px 0 auto; width: 100px; height: 32px; border-radius: 16px; background: #2680eb; color: #fff; font-weight: 600; font-size: 14.500px; display: flex; align-items: center; padding: 0 0 1px 16px; gap: 7px; }

.main { height: 601px; flex: none; display: flex; background: #fafafa; }
.rail { width: 45px; border-right: 1px solid #c6c6c6; position: relative; display: flex; flex-direction: column; align-items: center; padding-top: 21px; gap: 23px; }
.notch { position: absolute; right: -1px; top: 117px; }

.bookmarks { width: 346px; border-right: 1px solid #c6c6c6; background: #fcfcfc; }
.bhead { margin: 0 13px 0 16px; height: 41px; border-bottom: 1px solid #c6c6c6; display: flex; justify-content: space-between; align-items: center; padding-right: 8px; padding-bottom: 2px; font-size: 14px; letter-spacing: -0.15px; }
.btools { margin: 0 13px 0 16px; height: 44px; border-bottom: 1px solid #c6c6c6; display: flex; align-items: center; }
.btools .caret { margin-left: 5px; }
.bsep { width: 1px; height: 28px; background: #c6c6c6; margin: 0 10px 0 9px; }
.blist { margin-top: 7px; height: 505px; display: flex; overflow: hidden; }
.items { width: 323px; padding-left: 12px; margin-top: -2px; height: 600px; }
.row { display: flex; min-height: 26px; margin-bottom: 6px; }
.row .c { width: 12px; height: 12px; margin: 4px 9px 0 0; }
.row .b { width: 12px; height: 19px; margin-right: 10px; }
.row p { flex: 1; padding-left: 1px; font-size: 14.400px; line-height: 20px; letter-spacing: -0.15px; white-space: nowrap; margin-right: 1px; }
.row .wide { letter-spacing: -0.05px; }
.row.sub { padding-left: 16px; }
.row.sel p { background: #e2e2e2; color: #000; margin-top: -2px; padding-top: 2px; }

.sbar { background: #f0f0f0; display: flex; flex-direction: column; align-items: center; flex: none; }
.sbar .dn { margin-top: auto; }
.sbar .thumb { background: #cacaca; width: 15px; }
.bsb { width: 16px; padding: 6px 0 5px; }
.bsb .thumb { height: 64px; margin-top: 137px; margin-right: 1px; }
.psb { width: 16px; padding: 7px 0 5px; border-right: 1px solid #fafafa; }
.psb .thumb { height: 17px; margin-top: 134px; }

.gutter { width: 18px; background: #e9e9e9; display: flex; padding: 295px 0 0 6px; flex: none; }
.gutter i { width: 0; height: 0; border: 5.500px solid transparent; border-right: 6px solid #6e6e6e; border-left: 0; }
.gutter.right { width: 19px; border-left: 1px solid #c6c6c6; border-right: 1px solid #c6c6c6; padding-left: 5px; }

.page { width: 876px; flex: none; position: relative; background: #fff; padding: 75px 0 0 70px; color: #000; font-family: "Liberation Sans", Arial, sans-serif; white-space: nowrap; overflow: hidden; }
.phead { width: 734px; height: 31px; border-bottom: 4px solid #2525a0; display: flex; padding-left: 5px; font-size: 14.700px; line-height: 22px; }
.p1 { width: 276px; }
.p2 { letter-spacing: 0.02px; }
.page h2 { height: 22px; line-height: 22px; margin: 19px 0 0 13px; display: flex; font-size: 16px; }
.num { width: 83px; font-size: 14px; letter-spacing: -0.35px; }
.para { height: 20px; line-height: 20px; margin: 7px 0 0 13px; display: flex; font-family: "Liberation Serif", "Times New Roman", serif; font-size: 14.700px; letter-spacing: 0.01px; }
.para mark { background: #cce1fc; color: #000; }
.figure { margin: 17px 0 0 10px; }
.lbl text { font: 12px "Liberation Sans", Arial, sans-serif; fill: #000; }
.lbl .tiny { font-size: 9px; }
.caption { margin: 14px 0 0 13px; font-size: 13.300px; line-height: 20px; }

.find { position: absolute; left: 643px; top: 0; width: 226px; height: 99px; background: #323232; border-radius: 0 0 5px 5px; padding: 0 12px; box-shadow: 0 1px 3px rgba(0,0,0,.7); font-family: "Noto Sans", sans-serif; }
.ftop { height: 30px; display: flex; align-items: center; padding: 0 3px 2px 0; margin-left: -1px; font-size: 13px; color: #aaa; gap: 7px; }
.ftop b { color: #fff; }
.ftop svg { margin: -2px 0 0 auto; }
.finput { height: 24px; background: #fff; display: flex; align-items: center; justify-content: space-between; padding: 0 4px 0 5px; font-size: 13.700px; color: #222; }
.finput span { border-right: 1px solid #000; height: 20px; line-height: 20px; letter-spacing: -0.15px; }
.fbtns { display: flex; margin: 11px -1px 0 -1px; gap: 8px; }
.fbtns button { flex: 1; height: 25px; background: #808080; border: 1px solid #6a6a6a; border-radius: 3px; color: #fff; font-weight: 600; font-size: 14px; line-height: 22px; }
.fbtns .next { background: #a2a2a2; border-color: #8c8c8c; }
.tip { position: absolute; left: 675px; top: 108px; width: 155px; height: 21px; background: #ffffe1; border: 1px solid #646464; box-shadow: 3px 3px 3px rgba(0,0,0,.5); font: 12px/19px "Noto Sans", sans-serif; letter-spacing: -0.18px; padding-left: 2px; }

.tools { flex: 1; display: flex; flex-direction: column; align-items: center; padding: 10px 0 0 1px; }
.tools > svg, .tlist > svg { width: 26px; height: 26px; }
.tools hr { border: 0; width: 28px; height: 1px; background: #c6c6c6; }
.tools .t0 { margin-bottom: 10px; }
.tlist { display: flex; flex-direction: column; gap: 20px; margin-top: 10px; }
.tlist .cut { height: 14px; margin-top: -1px; }
.tools .more { width: 12px; height: 8px; margin: 7px 0 9px; }
.tools .coll { width: 14px; height: 16px; margin: 15px 0 0 4px; }

.taskbar { height: 40px; flex: none; display: flex; background: linear-gradient(90deg, #20343f, #20353f 45%, #1d2c42 78%, #1b2745); color: #fff; }
.start { width: 48px; display: flex; align-items: center; justify-content: center; }
.search { width: 343px; background: #f2f2f2; border: 1px solid #c4c4c4; color: #333; display: flex; align-items: center; padding-left: 11px; gap: 11px; font-size: 14px; letter-spacing: -0.05px; }
.apps { display: flex; }
.apps div { width: 49px; height: 40px; display: flex; align-items: center; justify-content: center; }
.apps div > svg { width: 25px; height: 25px; }
.apps .run { background: linear-gradient(#76b9ed, #76b9ed) 50% 100% / 40px 2px no-repeat; }
.apps .run.on { background: linear-gradient(#76b9ed, #76b9ed) 0 100% / 49px 2px no-repeat, #4d5b66; }
.apps .run.on > svg { width: 26px; height: 26px; }
.dim { opacity: .75; }
.apps text { font-family: "Liberation Sans", sans-serif; font-weight: bold; fill: #fff; text-anchor: middle; }
.cfg { font-size: 8px; }
.qc { font-size: 11px; }
.qt { font-size: 12px; }
.off { font-size: 11px; }
.tray { flex: 1; display: flex; align-items: center; padding-left: 32px; }
.bat { margin-left: 9px; }
.clock { width: 60px; margin-left: 8px; text-align: center; font-size: 12px; line-height: 18px; letter-spacing: -0.4px; padding-top: 1px; white-space: nowrap; }
.note { margin-left: 11px; }
.cnt { font: 12px "Noto Sans", sans-serif; fill: #fff; text-anchor: middle; }
```
